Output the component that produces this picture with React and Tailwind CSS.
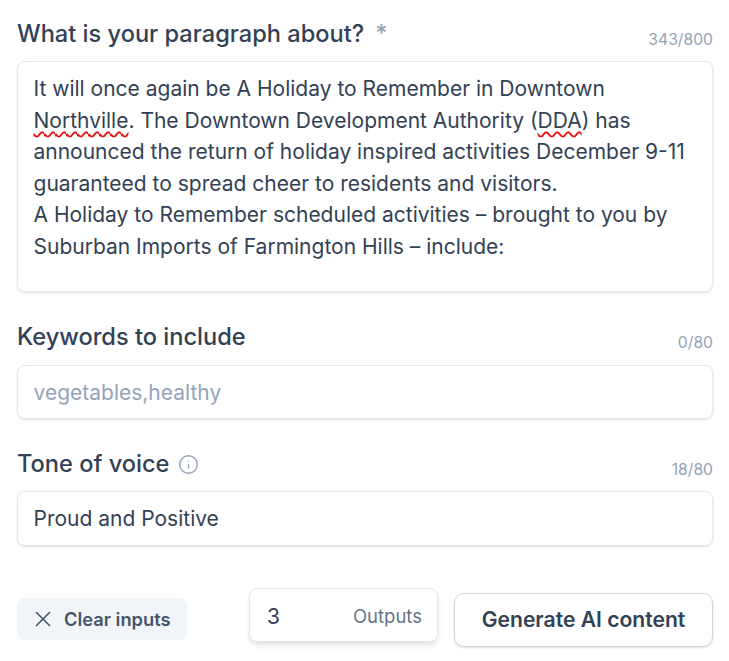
import { X, Info } from "lucide-react";

const Squiggle = ({ children }) => (
  <span className="underline decoration-wavy decoration-[#e5130f] decoration-[1.5px] underline-offset-[3px]">{children}</span>
);

const Field = ({ label, count, extra, className, children }) => (
  <div className={className}>
    <div className="flex items-end justify-between">
      <div className="flex items-center text-[23.6px] leading-[32px] font-medium text-[#334155]">
        {label}
        {extra}
      </div>
      <span className="text-[15.7px] leading-[20px] text-[#94a3b8]">{count}</span>
    </div>
    {children}
  </div>
);

export default function App() {
  return (
    <div className="h-[661px] w-[729px] overflow-hidden bg-white pl-[17px] pr-[16px] pt-[18px] font-['Inter',sans-serif] text-[#334155] antialiased">
      <Field
        label="What is your paragraph about?"
        count="343/800"
        extra={<span className="ml-[11px] text-[#94a3b8]">*</span>}
      >
        <div className="mt-[11px] h-[231px] rounded-[8px] border border-[#e2e8f0] pl-[15.5px] pr-[15px] pt-[11px] text-[21px] leading-[31.5px] shadow-sm">
          It will once again be A Holiday to Remember in Downtown
          <br />
          <Squiggle>Northville</Squiggle>. The Downtown Development Authority (<Squiggle>DDA</Squiggle>) has
          <br />
          announced the return of holiday inspired activities December 9-11
          <br />
          guaranteed to spread cheer to residents and visitors.
          <br />
          A Holiday to Remember scheduled activities – brought to you by
          <br />
          Suburban Imports of Farmington Hills – include:
        </div>
      </Field>

      <Field label="Keywords to include" count="0/80" className="mt-[29px]">
        <input
          readOnly
          placeholder="vegetables,healthy"
          className="mt-[12px] block h-[54px] w-full rounded-[8px] border border-[#e2e8f0] pl-[15.5px] pr-[15px] text-[21px] shadow-sm outline-none placeholder:text-[#94a3b8]"
        />
      </Field>

      <Field
        label="Tone of voice"
        count="18/80"
        className="mt-[29px]"
        extra={<Info className="ml-[9px] size-[21px] text-[#94a3b8]" strokeWidth={1.6} />}
      >
        <input
          readOnly
          value="Proud and Positive"
          className="mt-[11px] block h-[55px] w-full rounded-[8px] border border-[#e2e8f0] pl-[15.5px] pr-[15px] text-[21px] shadow-sm outline-none"
        />
      </Field>

      <div className="mt-[42px] flex items-start">
        <button className="mt-[10px] flex h-[42px] w-[170px] items-center rounded-[8px] bg-[#f1f5f9] pl-[13px] text-[18.3px] font-semibold text-[#475569]">
          <X className="mr-[8px] size-[26px]" strokeWidth={1.5} />
          <span className="pt-[1px]">Clear inputs</span>
        </button>
        <div className="ml-[62px] flex h-[54px] w-[189px] items-center justify-between rounded-[8px] border border-[#e2e8f0] pl-[17px] pr-[15px] pt-[3px] shadow-md">
          <span className="text-[21px]">3</span>
          <span className="text-[18.5px] text-[#64748b]">Outputs</span>
        </div>
        <button className="ml-[16px] mt-[5px] h-[54px] w-[259px] rounded-[10px] border border-[#cbd5e1] text-[21.1px] font-semibold text-[#334155] shadow-sm">
          Generate AI content
        </button>
      </div>
    </div>
  );
}
